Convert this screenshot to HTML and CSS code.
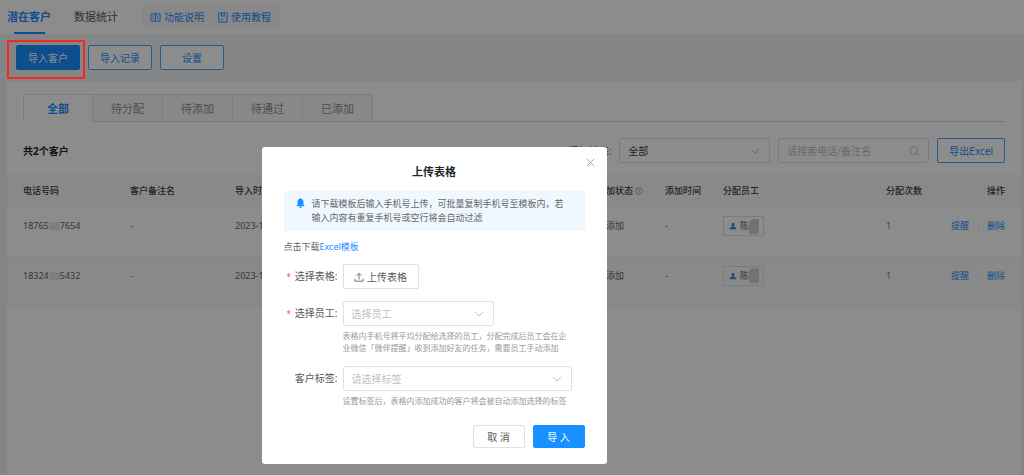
FILE: index.html
```html
<!DOCTYPE html>
<html lang="zh-CN">
<head>
  <meta charset="UTF-8">
  <meta name="viewport" content="width=device-width, initial-scale=1.0">
  <title>潜在客户</title>
  <link rel="stylesheet" href="styles.css">
</head>
<body>
  <header class="topbar">
    <nav class="topnav">
      <a class="topnav-item active" href="#">潜在客户</a>
      <a class="topnav-item" href="#">数据统计</a>
    </nav>
    <div class="help">
      <a href="#">
        <svg class="help-icon" viewBox="0 0 12 12"><path d="M6 2H1v8h5zM6 2h5v8H6zM2.500 4.500h2M2.500 7h2M7.500 4.500h2M7.500 7h2"/></svg>功能说明
      </a>
      <a href="#">
        <svg class="help-icon" viewBox="0 0 12 12"><path d="M2 1h9v10H2zM5 1v4l1.500-1L8 5V1M4 8h3"/></svg>使用教程
      </a>
    </div>
  </header>

  <div class="toolbar">
    <span class="highlight"><button class="btn btn-primary" type="button">导入客户</button></span>
    <button class="btn btn-ghost" type="button">导入记录</button>
    <button class="btn btn-ghost" type="button">设置</button>
  </div>

  <main class="card">
    <div class="tabs">
      <button class="tab active" type="button">全部</button>
      <button class="tab" type="button">待分配</button>
      <button class="tab" type="button">待添加</button>
      <button class="tab" type="button">待通过</button>
      <button class="tab" type="button">已添加</button>
    </div>

    <div class="filters">
      <strong class="total">共2个客户</strong>
      <label class="filter-label" for="status">添加状态:</label>
      <div class="select-box filter-box">
        <select id="status"><option>全部</option></select>
        <svg class="arrow" viewBox="0 0 10 10"><path d="M1 3l4 4 4-4"/></svg>
      </div>
      <div class="search filter-box">
        <input type="text" placeholder="请搜索电话/备注名" aria-label="搜索">
        <svg class="search-icon" viewBox="0 0 12 12"><circle cx="5.500" cy="5.500" r="4.500"/><path d="M9 9l2.500 2.500"/></svg>
      </div>
      <button class="btn btn-ghost" type="button">导出Excel</button>
    </div>

    <table class="table">
      <colgroup>
        <col class="col-phone"><col class="col-name"><col class="col-import"><col class="col-status">
        <col class="col-time"><col class="col-staff"><col class="col-count"><col class="col-action">
      </colgroup>
      <thead>
        <tr>
          <th>电话号码</th>
          <th>客户备注名</th>
          <th>导入时间</th>
          <th>添加状态 <svg class="question" viewBox="0 0 12 12"><circle cx="6" cy="6" r="5"/><path d="M4.500 4.800a1.500 1.500 0 1 1 2 1.400Q6 6.500 6 7.200M6 8.300v1"/></svg></th>
          <th>添加时间</th>
          <th>分配员工</th>
          <th>分配次数</th>
          <th class="right">操作</th>
        </tr>
      </thead>
      <tbody>
        <tr>
          <td><span class="phone">18765<i class="mask"></i>7654</span></td>
          <td>-</td>
          <td>2023-12-01</td>
          <td>待添加</td>
          <td>-</td>
          <td><span class="staff"><svg class="user" viewBox="0 0 10 10"><path d="M5 1a2 2 0 0 1 2 2c0 1-.6 1.600-1 2.200V6l3 1v2H1V7l3-1v-.8C3.600 4.600 3 4 3 3a2 2 0 0 1 2-2z"/></svg>陈<i class="mask-name"></i></span></td>
          <td><a href="#">1</a></td>
          <td class="right"><a class="remind" href="#">提醒</a><a href="#">删除</a></td>
        </tr>
        <tr>
          <td><span class="phone">18324<i class="mask"></i>5432</span></td>
          <td>-</td>
          <td>2023-12-01</td>
          <td>待添加</td>
          <td>-</td>
          <td><span class="staff"><svg class="user" viewBox="0 0 10 10"><path d="M5 1a2 2 0 0 1 2 2c0 1-.6 1.600-1 2.200V6l3 1v2H1V7l3-1v-.8C3.600 4.600 3 4 3 3a2 2 0 0 1 2-2z"/></svg>陈<i class="mask-name"></i></span></td>
          <td><a href="#">1</a></td>
          <td class="right"><a class="remind" href="#">提醒</a><a href="#">删除</a></td>
        </tr>
      </tbody>
    </table>
  </main>

  <div class="overlay">
    <div class="modal" role="dialog" aria-labelledby="modalTitle">
      <button class="close" type="button" aria-label="关闭">
        <svg viewBox="0 0 10 10"><path d="M1 1l8 8M9 1L1 9"/></svg>
      </button>
      <h2 class="modal-title" id="modalTitle">上传表格</h2>

      <div class="notice">
        <svg class="bell" viewBox="0 0 10 12"><path d="M5 0c.6 0 1 .4 1 1 1.700.5 2.500 2 2.500 3.500V8L10 9.500v.5H0v-.5L1.500 8V4.500C1.500 3 2.300 1.500 4 1c0-.6.4-1 1-1zM3.500 10.500h3C6.500 11.500 5.800 12 5 12s-1.500-.5-1.500-1.500z"/></svg>
        <p>请下载模板后输入手机号上传，可批量复制手机号至模板内，若<br>输入内容有重复手机号或空行将会自动过滤</p>
      </div>

      <p class="download">点击下载<a href="#">Excel模板</a></p>

      <form class="form">
        <label class="form-label required" for="upload">选择表格:</label>
        <div class="field">
          <button class="btn btn-default" id="upload" type="button">
            <svg class="upload-icon" viewBox="0 0 12 12"><path d="M6 9V1.500M3 4.500l3-3 3 3M1 8v3h10V8"/></svg>上传表格
          </button>
        </div>

        <label class="form-label required" for="staff">选择员工:</label>
        <div class="field">
          <div class="select-box staff-box">
            <select class="empty" id="staff"><option>选择员工</option></select>
            <svg class="arrow" viewBox="0 0 10 10"><path d="M1 3l4 4 4-4"/></svg>
          </div>
          <p class="hint">表格内手机号将平均分配给选择的员工，分配完成后员工会在企<br>业微信「微伴提醒」收到添加好友的任务，需要员工手动添加</p>
        </div>

        <label class="form-label" for="tag">客户标签:</label>
        <div class="field">
          <div class="select-box">
            <select class="empty" id="tag"><option>请选择标签</option></select>
            <svg class="arrow" viewBox="0 0 10 10"><path d="M1 3l4 4 4-4"/></svg>
          </div>
          <p class="hint">设置标签后，表格内添加成功的客户将会被自动添加选择的标签</p>
        </div>
      </form>

      <div class="modal-footer">
        <button class="btn btn-default" type="button">取 消</button>
        <button class="btn btn-primary" type="button">导 入</button>
      </div>
    </div>
  </div>
</body>
</html>
```
FILE: styles.css
```css
* {
  box-sizing: border-box;
}
body {
  display: flex;
  flex-direction: column;
  margin: 0;
  min-height: 100vh;
  background: #f0f2f5;
  color: #666;
  font-family: "Noto Sans", "Noto Sans CJK SC", sans-serif;
  font-size: 9px;
  line-height: 14px;
}
a {
  color: #1890ff;
  text-decoration: none;
}
p, h2 {
  margin: 0;
}
button, input, select {
  font-family: inherit;
  font-size: 10px;
}
svg {
  fill: none;
  stroke: currentColor;
  flex: none;
}

/* top bar */
.topbar {
  display: flex;
  align-items: center;
  gap: 24px;
  height: 34px;
  padding-left: 7px;
  background: #fff;
}
.topnav {
  display: flex;
  gap: 23px;
}
.topnav-item {
  display: flex;
  flex-direction: column;
  align-items: center;
  height: 34px;
  font-size: 11px;
  line-height: 34px;
  color: #595959;
}
.topnav-item.active {
  color: #1890ff;
  font-weight: bold;
}
.topnav-item.active::after {
  content: "";
  width: 31px;
  height: 2px;
  margin-top: -2px;
  background: #1890ff;
}
.help {
  display: flex;
  gap: 13px;
  padding: 4px 8px;
  background: #f7f7f7;
  font-size: 10px;
}
.help a {
  display: flex;
  align-items: center;
  gap: 3px;
}
.help-icon {
  width: 11px;
  height: 11px;
}

/* buttons */
.btn {
  display: inline-flex;
  align-items: center;
  justify-content: center;
  height: 25px;
  padding: 0 11px;
  border: 1px solid #e0e0e0;
  border-radius: 2px;
  background: #fff;
  color: #595959;
  white-space: nowrap;
}
.btn-primary {
  border-color: #1890ff;
  background: #1890ff;
  color: #fff;
}
.btn-ghost {
  border-color: #4ba6f8;
  color: #1890ff;
}
.toolbar {
  display: flex;
  gap: 8px;
  padding: 11px 16px;
}
.toolbar .btn {
  width: 64px;
}
.highlight {
  position: relative;
}
/* frame stays visible above the mask */
.highlight::after {
  content: "";
  position: absolute;
  z-index: 20;
  inset: -5px -5px -9px -9px;
  border: 2px solid #f5281e;
  border-radius: 1px;
}

/* customer list */
.card {
  flex: 1;
  margin: 0 3px 0 7px;
  background: #fff;
}
.tabs {
  display: flex;
  margin: 0 16px;
  padding-top: 13px;
  box-shadow: inset 0 -1px #d9d9d9;
}
.tab {
  width: 70px;
  height: 28px;
  padding: 0;
  border: 1px solid #e4e4e4;
  border-left-width: 0;
  border-bottom-color: #d9d9d9;
  background: #f8f8fa;
  color: #8c8c8c;
  font-size: 11px;
}
.tab.active {
  border-left-width: 1px;
  border-bottom-color: #fff;
  background: #fff;
  color: #1890ff;
  font-weight: bold;
}
.filters {
  display: flex;
  align-items: center;
  gap: 8px;
  padding: 16px 16px 11px;
}
.total {
  margin-right: auto;
  color: #262626;
  font-size: 10px;
}
.filter-label {
  font-size: 10px;
}
.filter-box {
  width: 151px;
}
.select-box, .search {
  display: flex;
  align-items: center;
  height: 25px;
  padding: 0 9px 0 8px;
  border: 1px solid #e0e0e0;
  border-radius: 2px;
  background: #fff;
}
.select-box select, .search input {
  flex: 1;
  min-width: 0;
  padding: 0;
  border: 0;
  outline: 0;
  background: none;
  color: #404040;
  appearance: none;
}
.select-box .empty, .search input::placeholder {
  color: #bfbfbf;
}
.arrow, .search-icon {
  width: 10px;
  height: 10px;
  color: #bfbfbf;
}
.table {
  width: 100%;
  border-collapse: collapse;
  table-layout: fixed;
}
.col-phone { width: 123px; }
.col-name { width: 105px; }
.col-import { width: auto; }
.col-status { width: 68px; }
.col-time { width: 58px; }
.col-staff { width: 163px; }
.col-count { width: 56px; }
.col-action { width: 79px; }
.table th, .table td {
  padding: 0;
  text-align: left;
  white-space: nowrap;
}
.table th {
  height: 33px;
  background: #fafafa;
  color: #404040;
  font-weight: 500;
}
.table td {
  height: 49px;
  padding-bottom: 10px;
  border-bottom: 1px solid #f4f4f4;
}
.table tbody tr:nth-child(2) {
  background: #fafafa;
}
.table th:first-child, .table td:first-child {
  padding-left: 16px;
}
.table .right {
  padding-right: 16px;
  text-align: right;
}
.question {
  width: 8px;
  height: 8px;
  color: #8c8c8c;
  vertical-align: -1px;
}
.phone, .staff {
  display: inline-flex;
  align-items: center;
}
.mask {
  width: 11px;
  height: 8px;
  background: #e6e6e6;
}
.staff {
  height: 20px;
  padding: 0 4px 0 5px;
  border: 1px solid #e0e0e0;
}
.user {
  width: 8px;
  height: 8px;
  margin-right: 3px;
  fill: #4f86bd;
  stroke: none;
}
.mask-name {
  width: 10px;
  height: 15px;
  border-radius: 5px 0 0 0;
  background: #d0d0d0;
}
.remind {
  margin-right: 8px;
  padding-right: 9px;
  border-right: 1px solid #f0f0f0;
}

/* upload dialog */
.overlay {
  position: fixed;
  z-index: 10;
  inset: 0;
  display: flex;
  align-items: flex-start;
  justify-content: center;
  padding: 147px 156px 0 0;
  background: rgba(0, 0, 0, 0.45);
}
.modal {
  position: relative;
  width: 345px;
  padding: 17px 22px 16px;
  border-radius: 3px;
  background: #fff;
}
.close {
  position: absolute;
  top: 11px;
  right: 12px;
  display: flex;
  padding: 0;
  border: 0;
  background: none;
  color: #999;
}
.close svg {
  width: 9px;
  height: 9px;
}
.modal-title {
  color: #262626;
  font-size: 11px;
  line-height: 16px;
  text-align: center;
}
.notice {
  display: flex;
  gap: 7px;
  margin-top: 11px;
  padding: 6px 12px;
  background: #f0f8ff;
}
.bell {
  width: 9px;
  height: 10px;
  margin-top: 1px;
  fill: #1890ff;
  stroke: none;
}
.download {
  margin-top: 9px;
}
.form {
  display: grid;
  grid-template-columns: 54px 1fr;
  column-gap: 5px;
  row-gap: 12px;
  margin-top: 10px;
}
.form-label {
  color: #595959;
  font-size: 10px;
  line-height: 25px;
  text-align: right;
  white-space: nowrap;
}
.required::before {
  content: "*";
  margin-right: 4px;
  color: #ff4d4f;
  font-size: 8px;
}
.field {
  padding-right: 13px;
}
.field .btn {
  gap: 3px;
  width: 76px;
}
.upload-icon {
  width: 10px;
  height: 10px;
}
.staff-box {
  width: 151px;
}
.hint {
  margin-top: 4px;
  color: #999;
  font-size: 8px;
  line-height: 12px;
  white-space: nowrap;
}
.modal-footer {
  display: flex;
  justify-content: flex-end;
  gap: 8px;
  margin-top: 18px;
}
.modal-footer .btn {
  width: 52px;
  height: 23px;
}
```
